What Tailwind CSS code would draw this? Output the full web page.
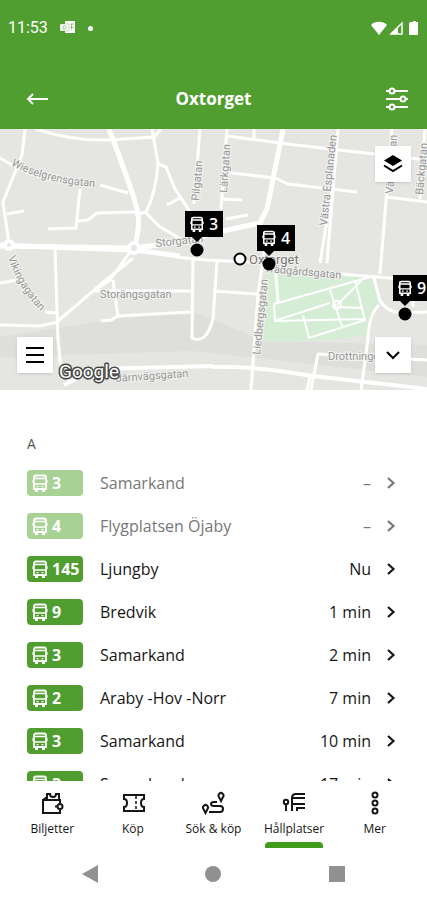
<!DOCTYPE html>
<html lang="sv">
  <head>
    <meta charset="UTF-8" />
    <meta name="viewport" content="width=device-width, initial-scale=1.0" />
    <title>Oxtorget</title>
    <script src="https://cdn.jsdelivr.net/npm/@tailwindcss/browser@4"></script>
  </head>
  <body class="bg-white font-['Open_Sans',sans-serif] text-[#161616]">
    <svg class="hidden">
      <symbol id="bus" viewBox="0 0 16 18">
        <path d="M4 1.500h8q2 0 2 2V15H2V3.500q0-2 2-2z" fill="none" stroke="currentColor" stroke-width="1.800" />
        <path d="M2 4.500h12M2 10h12" fill="none" stroke="currentColor" stroke-width="1.600" />
        <path d="M1 6v3M15 6v3" stroke="currentColor" stroke-width="1.200" />
        <path d="M4.500 12.600h2M9.500 12.600h2" stroke="currentColor" stroke-width="1.400" />
        <path d="M3 15h3v3H3zM10 15h3v3h-3z" fill="currentColor" />
      </symbol>
      <symbol id="chevron" viewBox="0 0 10 14">
        <path d="M2 2l5.500 5L2 12" fill="none" stroke="currentColor" stroke-width="2.200" />
      </symbol>
    </svg>

    <div class="flex h-screen flex-col">
      <header class="bg-[#509e2f] text-white">
        <div class="flex h-14 items-center px-2 font-[Roboto,sans-serif]">
          <span class="text-base leading-5">11:53</span>
          <svg class="ml-3 h-4 w-4" viewBox="0 0 16 16" fill="none">
            <path d="M5 1h10v12H5z" fill="#fff" />
            <path d="M0 4h9v7H0z" fill="#fff" stroke="#509e2f" stroke-opacity=".5" stroke-width=".7" />
            <path d="M10 4h4M10 7.500h4M11.500 4v6" stroke="#509e2f" stroke-opacity=".55" />
            <circle cx="4.500" cy="7.500" r="1.700" stroke="#509e2f" stroke-opacity=".6" />
          </svg>
          <span class="ml-3 h-[5px] w-[5px] rounded-full bg-white"></span>
          <svg class="ml-auto h-4 w-[50px]" viewBox="0 0 50 16">
            <path d="M2 5C6 .6 14 .6 18 5L10 15z" fill="#fff" />
            <path d="M33 3v11H22z" fill="none" stroke="#fff" stroke-width="1.500" />
            <path d="M29 7v7h-8z" fill="#fff" />
            <path d="M42 2h2V1h3v1h2v13h-9V3.500q0-1.500 2-1.500z" fill="#fff" />
          </svg>
        </div>
        <div class="flex h-[73px] items-center justify-between px-4 pt-3">
          <button class="flex h-10 w-10 items-center justify-center" aria-label="Tillbaka">
            <svg class="h-4 w-6" viewBox="0 0 24 16" fill="none" stroke="currentColor" stroke-width="2">
              <path d="M9 3 4 8l5 5M4 8h20" />
            </svg>
          </button>
          <h1 class="text-[17px] font-bold leading-6">Oxtorget</h1>
          <button class="flex h-10 w-10 items-center justify-end" aria-label="Filter">
            <svg class="mr-[2px] h-6 w-6" viewBox="0 0 24 24" fill="#509e2f" stroke="currentColor" stroke-width="2">
              <path d="M1 4h22M1 12h22M1 20h22" />
              <circle cx="7" cy="4" r="2.500" />
              <circle cx="18" cy="12" r="2.500" />
              <circle cx="7" cy="20" r="2.500" />
            </svg>
          </button>
        </div>
      </header>

      <section class="relative">
        <svg class="block h-[261px] w-full font-[Roboto,sans-serif]" viewBox="0 0 427 261" preserveAspectRatio="xMidYMid slice">
          <rect width="427" height="261" fill="#e5e5e2" />
          <path d="M0 208 115 190 192 182 264 212 427 216V261H0z" fill="#dededa" />
          <path d="M0 228 192 222 427 248V261H0z" fill="#e5e5e2" />
          <path d="M267 140 373 149 379 170 368 206 330 211 263 213z" fill="#d5edd5" />

          <!-- streets -->
          <g fill="none" stroke="#fff" stroke-width="3">
            <path d="M25 0 22 26 3 73 9 115" />
            <path d="M36 0Q72 12 108 11L154 8 161 0M152 0 158 34Q156 64 146 83L135 86" />
            <path d="M0 29Q35 51 65 52M100 56 128 64M80 60 76 99 48 100M77 92 88 91 97 84 137 83" />
            <path d="M7 85 24 82M158 35 166 38 175 60 191 84M167 76 180 69M146 84 160 98 181 110" />
            <path d="M200 0 194 75M227 0 221 80M227 7 287 15 427 31M254 0V10" />
            <path d="M222 43 275 49 288 55 357 63M222 70 242 71M226 90 248 86" />
            <path d="M338 0 327 134M332 60 320 134M392 0 380 145M425 0 420 70M387 68 427 73" />
            <path d="M55 121 58 210 61 241M0 154 17 151M45 183 56 184M0 196 40 197 58 193" />
            <path d="M58 192 100 156 133 129M96 161 110 151 130 123M113 151 118 188M101 192 111 191 118 187 192 183" />
            <path d="M94 162 192 162M193 130 192 209Q206 216 213 190M175 128 206 131 270 134M217 132 213 190M213 162 257 165" />
            <path d="M266 110 258 165 251 261M275 135 278 173M327 144 427 152M374 149 380 172Q388 183 400 184L427 183" />
            <path d="M379 176Q369 185 368 210L361 261M317 225 427 231M318 225 311 261M310 248 307 261M413 178V150" />
          </g>
          <g fill="none" stroke="#fff" stroke-width="2">
            <path d="M274 175 374 147M274 175 275 192 365 190M303 186 309 209 365 191 355 152M274 192 330 174M330 161 342 197M337 176 362 151M337 178 362 179" />
            <circle cx="337" cy="176" r="4" />
          </g>
          <g fill="none" stroke="#fff" stroke-width="5">
            <path d="M109 0Q120 28 133 66L138 84Q140 102 134 118" />
            <path d="M0 116 75 119 134 121 180 127M134 119 190 112 214 104 260 94 267 80 283 0" />
            <path d="M0 117 134 119" />
            <path d="M213 238Q245 236 313 247L427 260M64 256 95 240 213 237" stroke-width="4" />
          </g>
          <circle cx="9" cy="116" r="6" fill="#fff" />
          <circle cx="134" cy="119" r="7" fill="#fff" />
          <circle cx="134" cy="119" r="3" fill="#e5e5e2" />
          <circle cx="9" cy="116" r="2" fill="#e5e5e2" />

          <!-- street names -->
          <g fill="#969696" stroke="#f3f3f1" stroke-width="2" paint-order="stroke" font-size="11">
            <path id="wieselgren" d="M11 36Q45 56 110 59" fill="none" stroke="none" />
            <text><textPath href="#wieselgren">Wieselgrensgatan</textPath></text>
            <path id="viking" d="M8 128Q16 157 46 188" fill="none" stroke="none" />
            <text><textPath href="#viking">Vikingagatan</textPath></text>
            <text x="100" y="169">Storängsgatan</text>
            <text transform="translate(156 118) rotate(-6)">Storgatan</text>
            <text transform="translate(199 72) rotate(-85)">Pilgatan</text>
            <text transform="translate(227 64) rotate(-86)">Lärkgatan</text>
            <text transform="translate(327 97) rotate(-84)">Västra Esplanaden</text>
            <text transform="translate(393 65) rotate(-86)">Västergatan</text>
            <text transform="translate(423 66) rotate(-85)">Bäckgatan</text>
            <text transform="translate(260 226) rotate(-84)">Liedbergsgatan</text>
            <text transform="translate(264 143) rotate(5)">Trädgårdsgatan</text>
            <text x="328" y="231">Drottninggatan</text>
            <text transform="translate(116 253) rotate(-4)">Järnvägsgatan</text>
            <text x="249" y="135" fill="#777" font-size="13">Oxtorget</text>
          </g>
          <text x="59" y="249" fill="#fff" stroke="#444" stroke-width="3" paint-order="stroke" stroke-linejoin="round" font-size="19">Google</text>

          <!-- stops -->
          <circle cx="240" cy="130" r="5.500" fill="#fff" stroke="#000" stroke-width="2" />
          <g font-family="Open Sans, sans-serif" font-size="16" font-weight="600" fill="#fff" color="#fff">
            <g transform="translate(185 82)">
              <path d="M0 0h38v26H17l-5 5-5-5H0z" fill="#000" />
              <circle cx="12" cy="39" r="6.500" fill="#000" />
              <use href="#bus" x="5" y="5" width="14" height="16" />
              <text x="24" y="19">3</text>
            </g>
            <g transform="translate(257 96)">
              <path d="M0 0h38v26H17l-5 5-5-5H0z" fill="#000" />
              <circle cx="12" cy="39" r="6.500" fill="#000" />
              <use href="#bus" x="5" y="5" width="14" height="16" />
              <text x="24" y="19">4</text>
            </g>
            <g transform="translate(393 146)">
              <path d="M0 0h38v26H17l-5 5-5-5H0z" fill="#000" />
              <circle cx="12" cy="39" r="6.500" fill="#000" />
              <use href="#bus" x="5" y="5" width="14" height="16" />
              <text x="24" y="19">9</text>
            </g>
          </g>
        </svg>
        <button class="absolute right-4 top-[17px] flex h-9 w-9 items-center justify-center bg-white shadow" aria-label="Kartlager">
          <svg class="h-5 w-5" viewBox="0 0 20 20">
            <path d="M10 1 19 6.500 10 12 1 6.500z" fill="#000" />
            <path d="M1 11.500 10 17l9-5.500" fill="none" stroke="#000" stroke-width="2" />
          </svg>
        </button>
        <button class="absolute bottom-[17px] left-[17px] flex h-9 w-9 items-center justify-center bg-white shadow" aria-label="Lista">
          <svg class="h-[18px] w-[18px]" viewBox="0 0 18 18" stroke="#000" stroke-width="2">
            <path d="M0 2h18M0 9h18M0 16h18" />
          </svg>
        </button>
        <button class="absolute bottom-[17px] right-4 flex h-9 w-9 items-center justify-center bg-white shadow" aria-label="Minimera karta">
          <svg class="h-4 w-4" viewBox="0 0 16 16" fill="none" stroke="#000" stroke-width="2">
            <path d="m2 5 6 6 6-6" />
          </svg>
        </button>
      </section>

      <main class="min-h-0 flex-1 overflow-hidden px-[27px] pt-11">
        <h2 class="mb-4 text-sm leading-5 text-[#555]">A</h2>
        <ul class="flex flex-col gap-[17px] text-base leading-[26px]">
          <li>
            <a href="#" class="flex items-center text-[#777]">
              <span class="flex h-[26px] w-14 items-center gap-1 rounded bg-[#a8d196] pl-[5px] font-bold text-white"><svg class="h-[18px] w-4"><use href="#bus" /></svg>3</span>
              <span class="ml-[17px] flex-1">Samarkand</span>
              <span>–</span>
              <svg class="ml-[15px] mr-1 h-3.5 w-2.5"><use href="#chevron" /></svg>
            </a>
          </li>
          <li>
            <a href="#" class="flex items-center text-[#777]">
              <span class="flex h-[26px] w-14 items-center gap-1 rounded bg-[#a8d196] pl-[5px] font-bold text-white"><svg class="h-[18px] w-4"><use href="#bus" /></svg>4</span>
              <span class="ml-[17px] flex-1">Flygplatsen Öjaby</span>
              <span>–</span>
              <svg class="ml-[15px] mr-1 h-3.5 w-2.5"><use href="#chevron" /></svg>
            </a>
          </li>
          <li>
            <a href="#" class="flex items-center">
              <span class="flex h-[26px] w-14 items-center gap-1 rounded bg-[#509e2f] pl-[5px] font-bold text-white"><svg class="h-[18px] w-4"><use href="#bus" /></svg>145</span>
              <span class="ml-[17px] flex-1">Ljungby</span>
              <span>Nu</span>
              <svg class="ml-[15px] mr-1 h-3.5 w-2.5"><use href="#chevron" /></svg>
            </a>
          </li>
          <li>
            <a href="#" class="flex items-center">
              <span class="flex h-[26px] w-14 items-center gap-1 rounded bg-[#509e2f] pl-[5px] font-bold text-white"><svg class="h-[18px] w-4"><use href="#bus" /></svg>9</span>
              <span class="ml-[17px] flex-1">Bredvik</span>
              <span>1 min</span>
              <svg class="ml-[15px] mr-1 h-3.5 w-2.5"><use href="#chevron" /></svg>
            </a>
          </li>
          <li>
            <a href="#" class="flex items-center">
              <span class="flex h-[26px] w-14 items-center gap-1 rounded bg-[#509e2f] pl-[5px] font-bold text-white"><svg class="h-[18px] w-4"><use href="#bus" /></svg>3</span>
              <span class="ml-[17px] flex-1">Samarkand</span>
              <span>2 min</span>
              <svg class="ml-[15px] mr-1 h-3.5 w-2.5"><use href="#chevron" /></svg>
            </a>
          </li>
          <li>
            <a href="#" class="flex items-center">
              <span class="flex h-[26px] w-14 items-center gap-1 rounded bg-[#509e2f] pl-[5px] font-bold text-white"><svg class="h-[18px] w-4"><use href="#bus" /></svg>2</span>
              <span class="ml-[17px] flex-1">Araby -Hov -Norr</span>
              <span>7 min</span>
              <svg class="ml-[15px] mr-1 h-3.5 w-2.5"><use href="#chevron" /></svg>
            </a>
          </li>
          <li>
            <a href="#" class="flex items-center">
              <span class="flex h-[26px] w-14 items-center gap-1 rounded bg-[#509e2f] pl-[5px] font-bold text-white"><svg class="h-[18px] w-4"><use href="#bus" /></svg>3</span>
              <span class="ml-[17px] flex-1">Samarkand</span>
              <span>10 min</span>
              <svg class="ml-[15px] mr-1 h-3.5 w-2.5"><use href="#chevron" /></svg>
            </a>
          </li>
          <li>
            <a href="#" class="flex items-center">
              <span class="flex h-[26px] w-14 items-center gap-1 rounded bg-[#509e2f] pl-[5px] font-bold text-white"><svg class="h-[18px] w-4"><use href="#bus" /></svg>3</span>
              <span class="ml-[17px] flex-1">Samarkand</span>
              <span>17 min</span>
              <svg class="ml-[15px] mr-1 h-3.5 w-2.5"><use href="#chevron" /></svg>
            </a>
          </li>
        </ul>
      </main>

      <nav class="grid h-[67px] grid-cols-5 bg-white px-3 text-xs">
        <a href="#" class="flex flex-col items-center pt-2.5">
          <svg class="h-6 w-6" viewBox="0 0 24 24" fill="none" stroke="currentColor" stroke-width="2">
            <path d="M20 12V9H3v13h17v-3M7 9V3h3q0 3 3 3t3-3h3v6M3 9l4-3" />
            <circle cx="20" cy="15.500" r="2.500" />
            <path d="M15 15.500h3" />
          </svg>
          <span class="mt-1 leading-5">Biljetter</span>
        </a>
        <a href="#" class="flex flex-col items-center pt-2.5">
          <svg class="h-6 w-6" viewBox="0 0 24 24" fill="none" stroke="currentColor" stroke-width="2">
            <path d="M3 4h20v4q-3 0-3 4t3 4v4H3v-4q3 0 3-4T3 8z" />
            <path d="M15 5v15" stroke-dasharray="3 2" stroke-width="1.500" />
          </svg>
          <span class="mt-1 leading-5">Köp</span>
        </a>
        <a href="#" class="flex flex-col items-center pt-2.5">
          <svg class="h-6 w-6" viewBox="0 0 24 24" fill="none" stroke="currentColor" stroke-width="2">
            <path d="M20 10 18 6a2.500 2.500 0 1 1 4 0zM4.500 22l-2-4a2.500 2.500 0 1 1 4 0z" />
            <path d="M16 11h-3q-3 0-3 2t3 2h6q3 0 3 3t-3 3H8" />
          </svg>
          <span class="mt-1 whitespace-nowrap leading-5">Sök &amp; köp</span>
        </a>
        <a href="#" class="flex flex-col items-center pt-2.5">
          <svg class="h-6 w-6" viewBox="0 0 24 24" fill="none" stroke="currentColor" stroke-width="2">
            <circle cx="4" cy="11" r="2.200" />
            <path d="M4 13v7M10 20V7q0-4 4-4h9M10 7h13M10 13h13M15 20v-3h8" />
          </svg>
          <span class="mt-1 leading-5">Hållplatser</span>
          <span class="mt-auto h-1.5 w-[58px] rounded-t bg-[#3f9c1c]"></span>
        </a>
        <a href="#" class="flex flex-col items-center pt-2.5">
          <svg class="h-6 w-6" viewBox="0 0 24 24" fill="none" stroke="currentColor" stroke-width="2">
            <circle cx="12" cy="4" r="2.500" />
            <circle cx="12" cy="12" r="2.500" />
            <circle cx="12" cy="20" r="2.500" />
          </svg>
          <span class="mt-1 leading-5">Mer</span>
        </a>
      </nav>

      <!-- android navigation -->
      <div class="grid h-[52px] grid-cols-3 items-center justify-items-center bg-white px-7">
        <button aria-label="Bakåt"><svg class="block h-[18px] w-4" viewBox="0 0 16 18"><path d="M16 0v18L0 9z" fill="#919191" /></svg></button>
        <button class="h-4 w-4 rounded-full bg-[#919191]" aria-label="Hem"></button>
        <button class="h-4 w-4 bg-[#919191]" aria-label="Översikt"></button>
      </div>
    </div>
  </body>
</html>
